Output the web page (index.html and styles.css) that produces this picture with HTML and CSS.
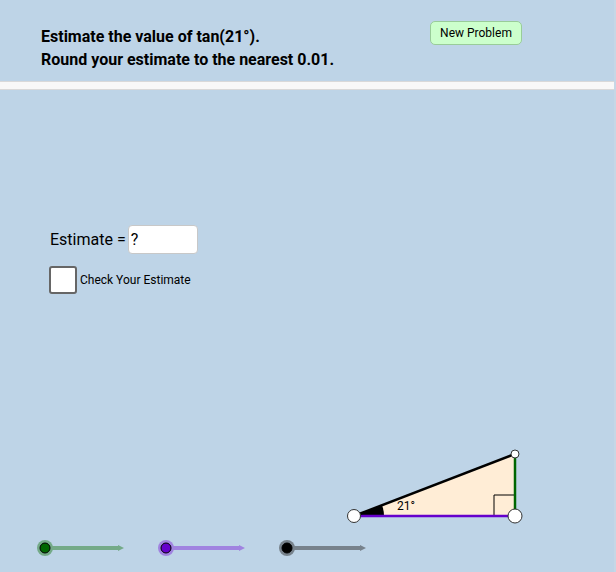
FILE: index.html
```html
<!DOCTYPE html>
<html lang="en">
<head>
    <meta charset="UTF-8">
    <meta name="viewport" content="width=device-width, initial-scale=1.0">
    <title>Estimate tan</title>
    <link rel="stylesheet" href="styles.css">
</head>
<body>
    <div class="applet">
        <div class="header">
            <div class="prompt">
                <p>Estimate the value of tan(21°).</p>
                <p>Round your estimate to the nearest 0.01.</p>
            </div>
            <button class="new-problem">New Problem</button>
        </div>
        <div class="divider"></div>
        <div class="stage">
            <div class="estimate">
                <span class="estimate-label">Estimate =</span>
                <span class="estimate-input">?</span>
            </div>
            <label class="check">
                <span class="check-box"></span>
                <span class="check-text">Check Your Estimate</span>
            </label>
        </div>

        <!-- drawing layer: triangle and sliders -->
        <svg class="canvas" width="616" height="572" viewBox="0 0 616 572">
            <polygon points="354,516 515,516 515,454" fill="#ffedd6"/>
            <path d="M354,516 L384,516 A30,30 0 0 0 382,505.2 Z" fill="#000"/>
            <polyline points="494,516 494,495 515,495" fill="none" stroke="#000" stroke-width="1"/>
            <line x1="354" y1="516" x2="515" y2="516" stroke="#6600cc" stroke-width="2.5"/>
            <line x1="515" y1="516" x2="515" y2="454" stroke="#006600" stroke-width="2.5"/>
            <line x1="354" y1="516" x2="515" y2="454" stroke="#000" stroke-width="2.5"/>
            <text x="397" y="510" class="angle-label">21°</text>
            <circle cx="354" cy="516" r="6.5" fill="#fff" stroke="#333" stroke-width="1"/>
            <circle cx="515" cy="516" r="7" fill="#fff" stroke="#333" stroke-width="1"/>
            <circle cx="515" cy="454" r="4" fill="#fff" stroke="#333" stroke-width="1"/>

            <line x1="45" y1="548" x2="119" y2="548" stroke="#74aa88" stroke-width="4"/>
            <polygon points="118,545 124,548 118,551" fill="#74aa88"/>
            <circle cx="45" cy="548" r="8" fill="#74aa88"/>
            <circle cx="45" cy="548" r="5" fill="#006600" stroke="#000" stroke-width="1"/>

            <line x1="166" y1="548" x2="240" y2="548" stroke="#a083e0" stroke-width="4"/>
            <polygon points="239,545 245,548 239,551" fill="#a083e0"/>
            <circle cx="166" cy="548" r="8" fill="#a083e0"/>
            <circle cx="166" cy="548" r="5" fill="#6600cc" stroke="#000" stroke-width="1"/>

            <line x1="287" y1="548" x2="361" y2="548" stroke="#77828c" stroke-width="4"/>
            <polygon points="360,545 366,548 360,551" fill="#77828c"/>
            <circle cx="287" cy="548" r="8" fill="#77828c"/>
            <circle cx="287" cy="548" r="5" fill="#000" stroke="#000" stroke-width="1"/>
        </svg>
    </div>
</body>
</html>
```

FILE: styles.css
```css
body {
    margin: 0;
    padding: 0;
    background-color: #c6d7e6;
    font-family: Roboto, "Liberation Sans", sans-serif;
    color: #000;
}
.applet {
    position: relative;
    width: 614px;
    height: 572px;
    background-color: #bed4e7;
    overflow: hidden;
}
.header {
    height: 81px;
    display: flex;
    justify-content: space-between;
    align-items: flex-start;
    padding: 0 92px 0 41px;
    box-sizing: border-box;
}
.prompt {
    padding-top: 25px;
}
.prompt p {
    margin: 0;
    font-size: 16px;
    font-weight: bold;
    line-height: 23px;
}
.new-problem {
    margin-top: 21px;
    width: 92px;
    height: 24px;
    padding: 0;
    font-family: Roboto, "Liberation Sans", sans-serif;
    font-size: 12px;
    color: #000;
    background-color: #ccffcc;
    border: 1px solid #99cc99;
    border-radius: 5px;
}
.divider {
    height: 7px;
    background-color: #f8f8f8;
    border-top: 1px solid #d9d9d9;
    border-bottom: 1px solid #d9d9d9;
}
.stage {
    padding: 135px 0 0 49px;
}
.estimate {
    display: flex;
    align-items: center;
    gap: 2px;
}
.estimate-label {
    font-size: 16px;
    padding-left: 1px;
}
.estimate-input {
    width: 66px;
    height: 27px;
    line-height: 27px;
    padding-left: 2px;
    font-size: 16px;
    background-color: #fff;
    border: 1px solid #c8c8c8;
    border-radius: 4px;
}
.check {
    display: flex;
    align-items: center;
    gap: 3px;
    margin-top: 12px;
}
.check-box {
    width: 24px;
    height: 24px;
    background-color: #fff;
    border: 2px solid #666;
    border-radius: 3px;
}
.check-text {
    font-size: 12px;
}
.canvas {
    position: absolute;
    top: 0;
    left: 0;
    pointer-events: none;
}
.angle-label {
    font-family: Roboto, "Liberation Sans", sans-serif;
    font-size: 12px;
}
```
